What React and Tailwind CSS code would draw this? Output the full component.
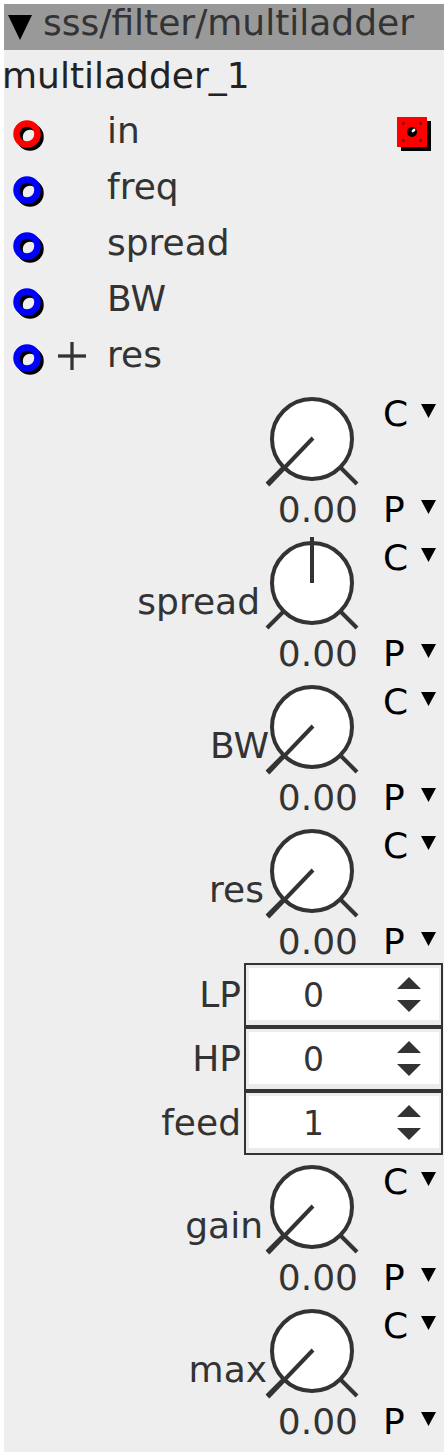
import React from 'react'

const FONT = { fontFamily: '"DejaVu Sans", Verdana, sans-serif' }

function SmallTri() {
  return (
    <svg width="15" height="14" viewBox="0 0 15 14" className="block">
      <polygon points="0,0 15,0 7.5,14" fill="#000" />
    </svg>
  )
}

function Port({ color }) {
  return (
    <svg width="44" height="44" viewBox="0 0 44 44" className="block shrink-0">
      <circle cx="25" cy="28" r="10.5" fill="none" stroke="#000" strokeWidth="6.5" />
      <circle cx="22" cy="25" r="10.5" fill="none" stroke={color} strokeWidth="6.5" />
    </svg>
  )
}

function OutPort() {
  return (
    <svg width="40" height="40" viewBox="0 0 40 40" className="block shrink-0">
      <rect x="6" y="10" width="30" height="30" fill="#000" />
      <rect x="2" y="6" width="30" height="30" fill="#ff0000" />
      {/* corner marks */}
      <path d="M8 14 V12 H10 M24 12 H26 V14 M8 28 V30 H10 M24 30 H26 V28" stroke="#222" strokeWidth="1.2" fill="none" />
      <circle cx="17" cy="21" r="5" fill="#000" />
      <ellipse cx="18.5" cy="19.5" rx="2.2" ry="1.4" fill="#fff" transform="rotate(-40 18.5 19.5)" />
    </svg>
  )
}

function Knob({ label, mid, labelCls }) {
  return (
    <div className="flex justify-end h-[138px] mb-[6px]">
      {label && (
        <div className={`pt-[44px] leading-[42px] text-[36px] text-[#333] whitespace-nowrap ${labelCls}`}>
          {label}
        </div>
      )}
      <div className="w-[96px] flex flex-col shrink-0 relative z-10">
        <svg width="96" height="96" viewBox="0 0 96 96" className="block">
          <circle cx="48" cy="46" r="40" fill="#fff" stroke="#333" strokeWidth="4" />
          <line x1="19" y1="75" x2="3" y2="91" stroke="#333" strokeWidth="4" />
          <line x1="77" y1="75" x2="93" y2="91" stroke="#333" strokeWidth="4" />
          {mid ? (
            <line x1="48" y1="46" x2="48" y2="-20" stroke="#333" strokeWidth="4" />
          ) : (
            <line x1="49" y1="45" x2="4" y2="92" stroke="#333" strokeWidth="4" />
          )}
        </svg>
        <div className="h-[42px] leading-[42px] text-[36px] text-[#333] text-right pr-[2px] whitespace-nowrap">0.00</div>
      </div>
      <div className="w-[61px] ml-[23px] flex flex-col justify-between shrink-0">
        <div className="flex h-[42px] leading-[42px] text-[36px] text-black">
          <span className="w-[38px]">C</span>
          <div className="pt-[11px]"><SmallTri /></div>
        </div>
        <div className="flex h-[42px] leading-[42px] text-[36px] text-black">
          <span className="w-[38px]">P</span>
          <div className="pt-[11px]"><SmallTri /></div>
        </div>
      </div>
    </div>
  )
}

function Spin({ label, value }) {
  return (
    <div className="flex justify-end items-center h-[64px]">
      <div className="mr-[3px] leading-[42px] text-[36px] text-[#333]">{label}</div>
      <div className="w-[199px] h-[64px] mr-[1px] border-2 border-[#333] bg-[#ececec] pt-[3px] pl-[3px] pr-[2px] pb-[5px]">
        <div className="h-full bg-white flex items-center">
          <div className="flex-1 text-center text-[33px] leading-[38px] text-[#333] pt-[4px]">{value}</div>
          <div className="w-[61px] flex justify-center">
            <svg width="24" height="35" viewBox="0 0 24 35" className="block">
              <polygon points="12,0 24,12 0,12" fill="#333" />
              <polygon points="0,23 24,23 12,35" fill="#333" />
            </svg>
          </div>
        </div>
      </div>
    </div>
  )
}

export default function App() {
  const ports = [
    { name: 'in', color: '#ff0000' },
    { name: 'freq', color: '#0000ff' },
    { name: 'spread', color: '#0000ff' },
    { name: 'BW', color: '#0000ff' },
    { name: 'res', color: '#0000ff', plus: true },
  ]

  return (
    <div className="bg-white p-[4px] w-[448px] h-[1456px]" style={FONT}>
      <div className="bg-[#eeeeee] w-[440px] h-[1448px]">

        {/* header */}
        <div className="h-[46px] bg-[#999999] flex items-start pl-[4px]">
          <svg width="24" height="25" viewBox="0 0 24 25" className="block mt-[11px] shrink-0">
            <polygon points="0,0 24,0 12,25" fill="#000" />
          </svg>
          <div className="ml-[11px] text-[36px] leading-[42px] -mt-[2px] text-[#333] whitespace-nowrap">sss/filter/multiladder</div>
        </div>

        {/* node name */}
        <div className="h-[53px] pt-[5px] -ml-[2px] text-[36px] leading-[42px] text-[#222]">multiladder_1</div>

        {/* ports */}
        {ports.map((p, i) => (
          <div key={p.name} className="h-[56px] flex items-center">
            <div className="ml-[1px]"><Port color={p.color} /></div>
            <div className="w-[58px] flex items-center">
              {p.plus && (
                <svg width="30" height="30" viewBox="0 0 30 30" className="block ml-[8px] mt-[2px]">
                  <line x1="15" y1="1" x2="15" y2="29" stroke="#333" strokeWidth="3.3" />
                  <line x1="1" y1="15" x2="29" y2="15" stroke="#333" strokeWidth="3.3" />
                </svg>
              )}
            </div>
            <div className="text-[36px] leading-[42px] text-[#333]">{p.name}</div>
            {i === 0 && <div className="ml-auto mr-[9px]"><OutPort /></div>}
          </div>
        ))}

        {/* knobs */}
        <div className="mt-[10px]">
          <Knob />
          <Knob label="spread" mid labelCls="mr-[4px]" />
          <Knob label="BW" labelCls="-mr-[5px]" />
          <Knob label="res" labelCls="mr-0" />
        </div>

        <div className="-mt-[6px]">
          <Spin label="LP" value="0" />
          <Spin label="HP" value="0" />
          <Spin label="feed" value="1" />
        </div>

        <div className="mt-[6px]">
          <Knob label="gain" labelCls="mr-[1px]" />
          <Knob label="max" labelCls="-mr-[3px]" />
        </div>
      </div>
    </div>
  )
}
